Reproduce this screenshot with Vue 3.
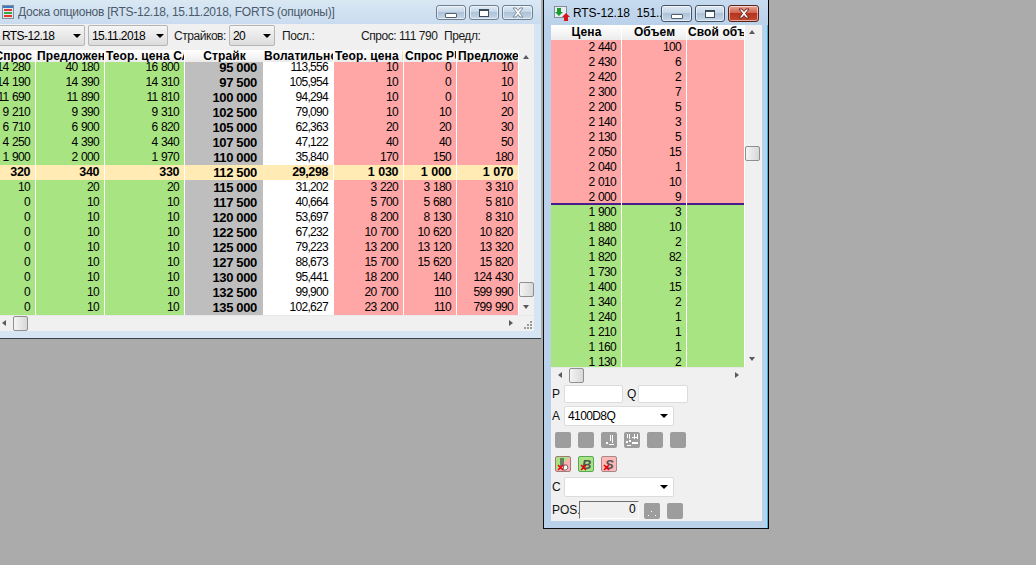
<script setup>
const wcols = ['spros', 'pred', 'teor', 'strike', 'vol', 'teor2', 'spros2', 'pred2']
const wheads = ['Спрос', 'Предложен', 'Теор. цена СА', 'Страйк', 'Волатильно', 'Теор. цена Р', 'Спрос РU', 'Предложен']
const board = [
  ['14 280', '40 180', '16 800', '95 000', '113,556', '10', '0', '10'],
  ['14 190', '14 390', '14 310', '97 500', '105,954', '10', '0', '10'],
  ['11 690', '11 890', '11 810', '100 000', '94,294', '10', '0', '10'],
  ['9 210', '9 390', '9 310', '102 500', '79,090', '10', '10', '20'],
  ['6 710', '6 900', '6 820', '105 000', '62,363', '20', '20', '30'],
  ['4 250', '4 390', '4 340', '107 500', '47,122', '40', '40', '50'],
  ['1 900', '2 000', '1 970', '110 000', '35,840', '170', '150', '180'],
  ['320', '340', '330', '112 500', '29,298', '1 030', '1 000', '1 070'],
  ['10', '20', '20', '115 000', '31,202', '3 220', '3 180', '3 310'],
  ['0', '10', '10', '117 500', '40,664', '5 700', '5 680', '5 810'],
  ['0', '10', '10', '120 000', '53,697', '8 200', '8 130', '8 310'],
  ['0', '10', '10', '122 500', '67,232', '10 700', '10 620', '10 820'],
  ['0', '10', '10', '125 000', '79,223', '13 200', '13 120', '13 320'],
  ['0', '10', '10', '127 500', '88,673', '15 700', '15 620', '15 820'],
  ['0', '10', '10', '130 000', '95,441', '18 200', '140', '124 430'],
  ['0', '10', '10', '132 500', '99,900', '20 700', '110', '599 990'],
  ['0', '10', '10', '135 000', '102,627', '23 200', '110', '799 990'],
]
const asks = [['2 440', '100'], ['2 430', '6'], ['2 420', '2'], ['2 300', '7'], ['2 200', '5'], ['2 140', '3'], ['2 130', '5'], ['2 050', '15'], ['2 040', '1'], ['2 010', '10'], ['2 000', '9']]
const bids = [['1 900', '3'], ['1 880', '10'], ['1 840', '2'], ['1 820', '82'], ['1 730', '3'], ['1 400', '15'], ['1 340', '2'], ['1 240', '1'], ['1 210', '1'], ['1 160', '1'], ['1 130', '2']]
</script>

<template>
  <div class="desktop">
    <section class="win board-win">
      <header class="title">
        <svg class="app-ico" width="12" height="14" viewBox="0 0 12 14">
          <rect x="0.5" y="0.5" width="11" height="13" fill="#dfe8ee" stroke="#7f8f9a" />
          <rect x="1" y="1" width="10" height="2" fill="#3c78c8" />
          <rect x="2" y="4" width="8" height="2" fill="#e03a2a" />
          <rect x="2" y="7" width="8" height="2" fill="#3aa84a" />
          <rect x="2" y="10" width="8" height="2" fill="#e03a2a" />
        </svg>
        <span class="title-text">Доска опционов [RTS-12.18, 15.11.2018, FORTS (опционы)]</span>
        <div class="caps">
          <button class="cap min"><i class="m-ico"></i></button>
          <button class="cap max"><i class="x-box"></i></button>
          <button class="cap close dim">
            <svg width="16" height="11" viewBox="0 0 16 11"><path d="M3 1h3l2 2.5L10 1h3L9.5 5.5 13 10h-3L8 7.5 6 10H3l3.5-4.5z" fill="#fff" stroke="#7d8b99" /></svg>
          </button>
        </div>
      </header>
      <div class="body">
        <div class="toolbar">
          <div class="combo c1"><span>RTS-12.18</span><b class="drop"></b></div>
          <div class="combo c2"><span>15.11.2018</span><b class="drop"></b></div>
          <span class="lbl l-str">Страйков:</span>
          <div class="combo c3"><span>20</span><b class="drop"></b></div>
          <span class="lbl l-last">Посл.:</span>
          <span class="lbl l-bid">Спрос: 111 790</span>
          <span class="lbl l-ask">Предл:</span>
        </div>
        <div class="grid-wrap">
          <div class="grid">
            <div class="row head">
              <div v-for="(h, i) in wheads" :key="i" class="cell" :class="wcols[i]">{{ h }}</div>
            </div>
            <div class="rows">
              <div v-for="(r, ri) in board" :key="ri" class="row" :class="{ atm: ri === 7 }">
                <div v-for="(v, i) in r" :key="i" class="cell" :class="wcols[i]">{{ v }}</div>
              </div>
            </div>
          </div>
          <div class="vbar">
            <i class="arr up"></i>
            <i class="thumb v-thumb-1"></i>
            <i class="arr down"></i>
          </div>
        </div>
        <div class="hbar">
          <i class="arr left"></i>
          <i class="thumb h-thumb-1"></i>
          <i class="arr right"></i>
          <svg class="gripper" width="10" height="10" viewBox="0 0 10 10" fill="#9a9a9a">
            <rect x="7" y="1" width="2" height="2" /><rect x="4" y="4" width="2" height="2" /><rect x="7" y="4" width="2" height="2" />
            <rect x="1" y="7" width="2" height="2" /><rect x="4" y="7" width="2" height="2" /><rect x="7" y="7" width="2" height="2" />
          </svg>
        </div>
      </div>
    </section>

    <section class="win book-win">
      <header class="title active">
        <svg class="app-ico" width="16" height="16" viewBox="0 0 16 16">
          <rect x="0.5" y="0.5" width="12" height="11" fill="#e6edf2" stroke="#7f8f9a" />
          <path d="M3 2h4v4h2L5 10 1 6h2z" fill="#1c9a2c" />
          <path d="M12 7l4 4h-2v4h-4v-4H8z" fill="#d8141e" />
        </svg>
        <span class="title-text">RTS-12.18&nbsp; 151...</span>
        <div class="caps">
          <button class="cap min"><i class="m-ico"></i></button>
          <button class="cap max"><i class="x-box"></i></button>
          <button class="cap close">
            <svg width="16" height="11" viewBox="0 0 16 11"><path d="M3 1h3l2 2.5L10 1h3L9.5 5.5 13 10h-3L8 7.5 6 10H3l3.5-4.5z" fill="#fff" stroke="#6d2a22" /></svg>
          </button>
        </div>
      </header>
      <div class="body book-body">
        <div class="grid-wrap book-grid-wrap">
          <div class="grid book">
            <div class="row head">
              <div class="cell price">Цена</div>
              <div class="cell qty">Объем</div>
              <div class="cell own">Свой объе</div>
            </div>
            <div v-for="(r, i) in asks" :key="r[0]" class="row ask" :class="{ last: i === asks.length - 1 }">
              <div class="cell price">{{ r[0] }}</div>
              <div class="cell qty">{{ r[1] }}</div>
              <div class="cell own"></div>
            </div>
            <div v-for="r in bids" :key="r[0]" class="row bid">
              <div class="cell price">{{ r[0] }}</div>
              <div class="cell qty">{{ r[1] }}</div>
              <div class="cell own"></div>
            </div>
          </div>
          <div class="vbar">
            <i class="arr up"></i>
            <i class="thumb v-thumb-2"></i>
            <i class="arr down"></i>
          </div>
        </div>
        <div class="hbar book-hbar">
          <i class="arr left"></i>
          <i class="thumb h-thumb-2"></i>
          <i class="arr right"></i>
        </div>
        <form class="form" @submit.prevent>
          <div class="f-row r-pq">
            <label>P</label><div class="inp i-p"></div>
            <label class="q">Q</label><div class="inp i-q"></div>
          </div>
          <div class="f-row r-a">
            <label>A</label>
            <div class="combo wide"><span>4100D8Q</span><b class="drop"></b></div>
          </div>
          <div class="tools">
            <span class="tool"></span>
            <span class="tool"></span>
            <span class="tool">
              <svg width="16" height="16" viewBox="0 0 16 16" fill="#fff"><rect x="9" y="3" width="1" height="6" /><rect x="11" y="3" width="1" height="8" /><rect x="5" y="10" width="2" height="2" /><rect x="8" y="12" width="5" height="1" /></svg>
            </span>
            <span class="tool">
              <svg width="16" height="16" viewBox="0 0 16 16" fill="#fff"><rect x="3" y="2" width="1" height="4" /><rect x="5" y="2" width="1" height="5" /><rect x="10" y="2" width="1" height="5" /><rect x="13" y="2" width="1" height="5" /><rect x="8" y="5" width="6" height="1" /><rect x="2" y="9" width="2" height="2" /><rect x="5" y="8" width="2" height="2" /><rect x="8" y="10" width="6" height="2" /><rect x="3" y="13" width="4" height="1" /></svg>
            </span>
            <span class="tool"></span>
            <span class="tool"></span>
          </div>
          <div class="tools t2">
            <span class="xbtn xb-m">
              <svg class="hand" width="16" height="16" viewBox="0 0 16 16"><path d="M6 2v8M8 2v8" stroke="#555" stroke-width="1.4" /><path d="M9 9h3l1 3-2 2H8z" fill="#fff" stroke="#333" stroke-width="0.7" /></svg>
              <svg class="redx" width="7" height="7" viewBox="0 0 7 7"><path d="M1 1l5 5M6 1L1 6" stroke="#e8000a" stroke-width="1.6" /></svg>
            </span>
            <span class="xbtn xb-b"><em>B</em>
              <svg class="redx" width="7" height="7" viewBox="0 0 7 7"><path d="M1 1l5 5M6 1L1 6" stroke="#e8000a" stroke-width="1.6" /></svg>
            </span>
            <span class="xbtn xb-s"><em>S</em>
              <svg class="redx" width="7" height="7" viewBox="0 0 7 7"><path d="M1 1l5 5M6 1L1 6" stroke="#e8000a" stroke-width="1.6" /></svg>
            </span>
          </div>
          <div class="f-row r-c">
            <label>C</label>
            <div class="combo wide"><span></span><b class="drop"></b></div>
          </div>
          <div class="f-row r-pos">
            <label>POS.</label>
            <div class="sunken">0</div>
            <span class="tool small-1">
              <svg width="16" height="16" viewBox="0 0 16 16" fill="#fff"><rect x="7" y="8" width="1" height="1" /><rect x="4" y="12" width="1" height="1" /><rect x="11" y="12" width="1" height="1" /></svg>
            </span>
            <span class="tool small-2"></span>
          </div>
        </form>
      </div>
    </section>
  </div>
</template>

<style>
html, body { margin: 0; padding: 0; background: #ababab; overflow: hidden; }
</style>

<style scoped>
.desktop { position: relative; width: 1036px; height: 565px; background: #ababab; overflow: hidden; font-family: "Liberation Sans", Arial, sans-serif; font-size: 12px; letter-spacing: -0.6px; color: #000; }
.win { position: absolute; box-sizing: border-box; display: flex; flex-direction: column; }
.board-win { left: -60px; top: -1px; width: 601px; height: 340px; border-bottom: 1px solid #3a4148; padding: 0 7px 7px; background: #d6e5f3; }
.book-win { left: 543px; top: -1px; width: 226px; height: 530px; border: 1px solid #0a1014; border-right-color: #000; box-shadow: inset -1px 0 0 #39b4d8; padding: 0 6px 7px 7px; background: #b9d1ea; }

.title { display: flex; align-items: center; height: 25px; flex: none; background: linear-gradient(#dbe8f4, #c9dcef); margin: 0 -7px; padding: 0 8px 0 0; position: relative; }
.board-win .title { padding-left: 62px; }
.book-win .title { margin: 0 -6px 0 -7px; padding: 0 9px 0 10px; background: linear-gradient(#c7dbef, #b9d1ea); }
.app-ico { flex: none; margin-right: 4px; }
.book-win .app-ico { margin-right: 3px; margin-top: 2px; }
.title-text { flex: 1; white-space: nowrap; color: #4b5a69; font-size: 12px; letter-spacing: -0.25px; overflow: hidden; }
.active .title-text { color: #000; letter-spacing: -0.1px; }
.caps { display: flex; gap: 3px; flex: none; align-self: flex-start; padding-top: 6px; }
.active .caps { padding-top: 5px; }
.cap { width: 30px; height: 15px; padding: 0; border: 1px solid #6e7f90; border-radius: 3px; background: linear-gradient(#dfe9f3 0, #c6d7e8 45%, #aec3d8 50%, #c6d7e8 100%); display: flex; align-items: center; justify-content: center; box-shadow: inset 0 0 0 1px rgba(255, 255, 255, 0.55); }
.active .cap { height: 17px; border-color: #44556a; }
.active .cap.min { width: 31px; }
.cap.close.dim { width: 31px; }
.active .cap.close { width: 31px; background: linear-gradient(#e8a498, #cf6450 45%, #b5341f 50%, #c4482f 100%); border-color: #5e2018; }
.m-ico { display: block; width: 10px; height: 3px; margin-top: 5px; background: #fff; border: 1px solid #51606e; border-radius: 1px; }
.x-box { display: block; width: 8px; height: 5px; border: 1px solid #3d4c5a; border-top-width: 2px; background: #fff; }

.body { background: #f0f0f0; display: flex; flex-direction: column; flex: 1; min-height: 0; position: relative; }
.toolbar { height: 24px; flex: none; display: flex; align-items: flex-start; box-sizing: border-box; padding-top: 1px; }
.combo { box-sizing: border-box; height: 21px; flex: none; display: flex; align-items: center; justify-content: space-between; border: 1px solid #b5b5b5; border-radius: 2px; background: linear-gradient(#f6f6f6, #dcdcdc); padding: 0 3px 0 3px; white-space: nowrap; }
.drop { width: 0; height: 0; border-left: 4px solid transparent; border-right: 4px solid transparent; border-top: 4px solid #000; }
.c1 { width: 138px; padding-left: 54px; }
.c2 { width: 80px; margin-left: 3px; }
.c3 { width: 46px; }
.lbl { white-space: nowrap; color: #1a1a1a; line-height: 23px; letter-spacing: -0.45px; flex: none; }
.l-str { margin-left: 6px; width: 55px; }
.l-last { margin-left: 7px; width: 79px; }
.l-bid { width: 83px; }

.grid-wrap { display: flex; flex: none; background: #f0f0f0; padding-top: 2px; }
.grid { overflow: hidden; flex: none; background: #fff; position: relative; }
.rows { margin-top: -2px; }
.row { display: flex; height: 15px; }
.cell { box-sizing: border-box; height: 15px; line-height: 15px; text-align: right; padding-right: 5px; white-space: nowrap; overflow: hidden; border-right: 1px solid #fff; font-size: 12px; letter-spacing: -0.7px; word-spacing: 1px; flex: none; }
.row.head { height: 12px; position: relative; z-index: 1; }
.spros { width: 89px; background: #a8e482; }
.pred { width: 69px; background: #a8e482; }
.teor { width: 80px; background: #a8e482; }
.strike { width: 78px; background: #bebebe; font-weight: bold; border-right: none; }
.vol { width: 71px; background: #fff; }
.teor2 { width: 70px; background: #ffa6a6; }
.spros2 { width: 53px; background: #ffa6a6; }
.pred2 { width: 62px; background: #ffa6a6; }
.cell.strike { font-size: 13px; letter-spacing: -0.35px; word-spacing: 0; padding-right: 6px; }
.atm .cell { background: #ffebb3; font-weight: bold; font-size: 12.5px; letter-spacing: -0.4px; }
.atm .cell.strike { font-size: 13px; letter-spacing: -0.35px; }
.row.head .cell { height: 12px; font: bold 12px/12px "Liberation Sans", Arial, sans-serif; letter-spacing: 0.1px; word-spacing: 0; background: linear-gradient(#fff, #f4f4f4 60%, #ebebeb); padding: 0 0 0 1px; text-align: left; color: #000; }
.row.head .spros { text-align: right; padding-right: 3px; }
.row.head .strike { text-align: center; }
.vbar { position: relative; width: 15px; height: 265px; background: #f0f0f0; flex: none; }
.hbar { position: relative; height: 15px; flex: none; background: #f0f0f0; border-top: 1px solid #e8e8e8; box-sizing: border-box; }
.thumb { position: absolute; width: 15px; height: 15px; box-sizing: border-box; border: 1px solid #8f8f8f; border-radius: 2px; background: linear-gradient(90deg, #f4f4f4, #d8d8d8); }
.arr { position: absolute; width: 0; height: 0; }
.arr.up { left: 4px; top: 5px; border-left: 3.5px solid transparent; border-right: 3.5px solid transparent; border-bottom: 4px solid #5a5a5a; }
.arr.down { left: 4px; bottom: 6px; border-left: 3.5px solid transparent; border-right: 3.5px solid transparent; border-top: 4px solid #5a5a5a; }
.arr.left { top: 4px; border-top: 3.5px solid transparent; border-bottom: 3.5px solid transparent; border-right: 4px solid #5a5a5a; }
.arr.right { top: 4px; border-top: 3.5px solid transparent; border-bottom: 3.5px solid transparent; border-left: 4px solid #5a5a5a; }
.v-thumb-1 { top: 232px; left: 0; }
.h-thumb-1 { left: 66px; top: 0; }
.board-win .arr.left { left: 55px; }
.board-win .arr.right { left: 562px; }
.gripper { position: absolute; right: 1px; bottom: 0; }

.book-grid-wrap { padding-top: 0; height: 342px; }
.book { width: 194px; height: 342px; }
.price { width: 71px; }
.qty { width: 65px; }
.own { width: 58px; }
.book .row.head { height: 15px; }
.book .row.head .cell { height: 15px; line-height: 15px; text-align: center; }
.book .row.head .own { text-align: left; }
.ask .cell { background: #ffa6a6; }
.bid .cell { background: #a8e482; }
.ask.last .cell { box-shadow: inset 0 -2px 0 #4a1c8a; }
.book-grid-wrap .vbar { width: 16px; height: 342px; }
.v-thumb-2 { top: 121px; left: 0; }
.book-hbar { width: 194px; }
.book-hbar .arr.left { left: 7px; }
.book-hbar .arr.right { left: 184px; }
.h-thumb-2 { left: 18px; top: 0; }

.form { flex: 1; display: flex; flex-direction: column; }
.f-row { display: flex; align-items: center; }
.f-row label { width: 13px; font-size: 12px; padding-left: 1px; box-sizing: border-box; color: #111; flex: none; white-space: nowrap; }
.r-pq { margin-top: 3px; height: 18px; }
.inp { height: 18px; box-sizing: border-box; background: #fff; border: 1px solid #dcdcdc; border-radius: 2px; flex: none; }
.i-p { width: 59px; }
.i-q { width: 50px; }
.f-row label.q { width: 15px; padding-left: 4px; }
.r-a { margin-top: 3px; height: 20px; }
.combo.wide { width: 110px; height: 20px; background: #fff; border-color: #dcdcdc; padding: 0 5px 0 3px; }
.tools { display: flex; gap: 7px; margin: 6px 0 0 4px; height: 16px; }
.tool { width: 16px; height: 16px; background: #9d9d9d; border-radius: 2px; display: block; flex: none; }
.tool svg { display: block; }
.t2 { margin-top: 8px; }
.xbtn { position: relative; width: 16px; height: 16px; box-sizing: border-box; border: 1px solid #8a9a8a; border-radius: 2px; display: block; overflow: hidden; flex: none; }
.xbtn em { position: absolute; left: 3px; top: 0; font: italic bold 13px/15px "Liberation Sans", sans-serif; color: #555; }
.xb-m { background: linear-gradient(135deg, #a8e482 50%, #ffb0b0 50%); border-color: #a07a7a; }
.xb-b { background: #a8e482; border-color: #5aa85a; }
.xb-s { background: #ffb8b8; border-color: #a88888; }
.redx { position: absolute; left: 1px; bottom: 0; }
.hand { position: absolute; left: -1px; top: -1px; }
.r-c { margin-top: 5px; height: 20px; }
.r-pos { margin-top: 3px; height: 19px; }
.f-row.r-pos label { width: 28px; letter-spacing: 0; }
.sunken { width: 60px; height: 18px; flex: none; box-sizing: border-box; border: 1px solid; border-color: #707070 #fff #fff #707070; background: #f0f0f0; text-align: right; padding-right: 3px; line-height: 15px; }
.small-1 { margin-left: 5px; margin-top: 3px; }
.small-2 { margin-left: 7px; margin-top: 3px; }
</style>
